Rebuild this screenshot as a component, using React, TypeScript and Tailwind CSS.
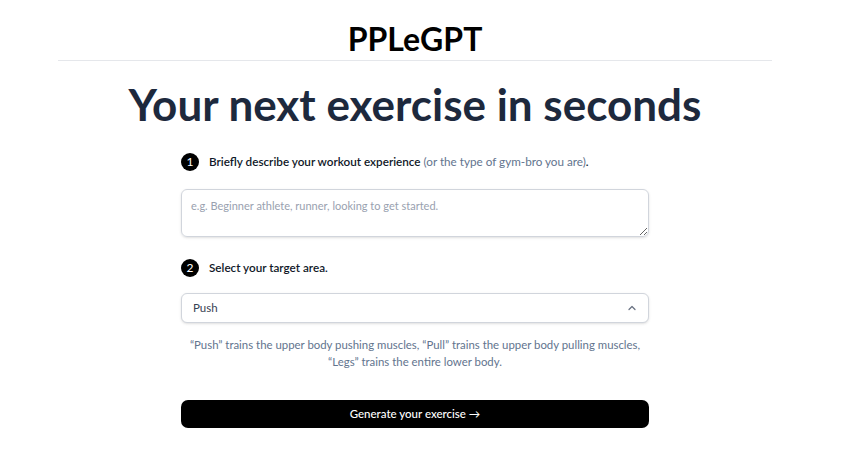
import { ChevronUp } from "lucide-react";

const font = { fontFamily: "Lato, 'Noto Sans', sans-serif" };

function Step({ n, children }: { n: number; children: React.ReactNode }) {
  return (
    <div className="flex items-center gap-[10px] h-[18px]">
      <span className="flex items-center justify-center w-[18px] h-[18px] rounded-full bg-black text-white text-[12px] leading-none shrink-0">
        {n}
      </span>
      <p className="text-[11.7px] font-semibold text-gray-900 leading-none whitespace-nowrap">{children}</p>
    </div>
  );
}

export default function App() {
  return (
    <div className="w-[830px] min-h-[460px] bg-white" style={font}>
      <header className="mx-[58px] h-[61px] pt-[18px] flex items-center justify-center border-b border-gray-200">
        <h1 className="text-[32px] font-bold text-black leading-none">PPLeGPT</h1>
      </header>

      <main className="flex flex-col items-center">
        <h2 className="mt-[20px] text-[44px] leading-[46px] font-bold text-slate-800 whitespace-nowrap">
          Your next exercise in seconds
        </h2>

        <div className="w-[468px] mt-[26px]">
          <Step n={1}>
            Briefly describe your workout experience{" "}
            <span className="text-slate-500 font-normal">(or the type of gym-bro you are)</span>.
          </Step>

          <textarea
            className="block mt-[18px] w-full h-[48px] rounded-md border border-gray-300 shadow-sm px-[9px] py-[8px] text-[11px] text-gray-800 placeholder:text-gray-400 focus:outline-none"
            placeholder="e.g. Beginner athlete, runner, looking to get started."
          />

          <div className="mt-[22px]">
            <Step n={2}>Select your target area.</Step>
          </div>

          <button className="mt-[16px] w-full h-[30px] flex items-center justify-between rounded-md border border-gray-300 bg-white shadow-sm pl-[11px] pr-[10px] text-[11.5px] text-gray-700">
            <span>Push</span>
            <ChevronUp className="w-[12px] h-[12px] text-gray-500" strokeWidth={2.5} />
          </button>

          <p className="mt-[13px] text-center text-[11.4px] leading-[17px] text-slate-500 whitespace-nowrap">
            “Push” trains the upper body pushing muscles, “Pull” trains the upper body pulling muscles,
            <br />
            “Legs” trains the entire lower body.
          </p>

          <button className="mt-[30px] w-full h-[28px] rounded-[7px] bg-black text-white text-[11.5px] font-medium">
            Generate your exercise →
          </button>
        </div>
      </main>
    </div>
  );
}
